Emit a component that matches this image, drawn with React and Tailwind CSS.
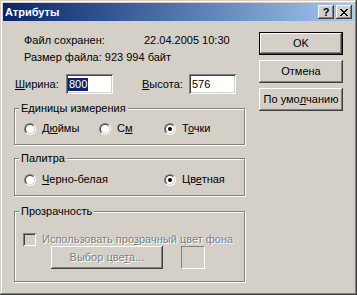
import React from 'react';

function Radio({ checked }) {
  return (
    <span className="flex h-[12px] w-[12px] shrink-0 rounded-full border border-t-[#808080] border-l-[#808080] border-b-white border-r-white">
      <span className="flex h-full w-full items-center justify-center rounded-full border border-t-[#404040] border-l-[#404040] border-b-[#d4d0c8] border-r-[#d4d0c8] bg-white">
        {checked && <span className="h-[4px] w-[4px] rounded-full bg-black" />}
      </span>
    </span>
  );
}

function Option({ checked, children, className }) {
  return (
    <div className={'flex items-center ' + (className || '')}>
      <Radio checked={checked} />
      <span className="ml-[6px] text-black">{children}</span>
    </div>
  );
}

function U({ children }) {
  return <span className="underline underline-offset-[1px]">{children}</span>;
}

function Group({ label, className, children }) {
  return (
    <div className={'relative w-[231px] border border-[#808080] shadow-[inset_1px_1px_0_#ffffff,1px_1px_0_#ffffff] ' + (className || '')}>
      <span className="absolute left-[4px] top-[-7px] bg-[#d4d0c8] px-[2px] leading-[13px]">{label}</span>
      {children}
    </div>
  );
}

function Button({ children, def, className }) {
  if (def) {
    return (
      <div className={'flex h-[23px] w-[84px] border border-black ' + (className || '')}>
        <div className="flex flex-1 items-center justify-center shadow-[inset_-1px_-1px_0_#404040,inset_1px_1px_0_#ffffff,inset_-2px_-2px_0_#808080]">
          {children}
        </div>
      </div>
    );
  }
  return (
    <div className={'flex h-[23px] items-center justify-center shadow-[inset_-1px_-1px_0_#404040,inset_1px_1px_0_#ffffff,inset_-2px_-2px_0_#808080] ' + (className || '')}>
      {children}
    </div>
  );
}

const sunken = 'shadow-[inset_1px_1px_0_#808080,inset_-1px_-1px_0_#ffffff,inset_2px_2px_0_#404040,inset_-2px_-2px_0_#d4d0c8]';

export default function App() {
  return (
    <div className="h-[295px] w-[357px] bg-[#d4d0c8] p-[3px] font-['Liberation_Sans',sans-serif] text-[11px] leading-[13px] text-black shadow-[inset_-1px_-1px_0_#404040,inset_1px_1px_0_#d4d0c8,inset_-2px_-2px_0_#808080,inset_2px_2px_0_#ffffff]">
      {/* Title bar */}
      <div className="flex h-[18px] items-center bg-gradient-to-r from-[#0a246a] to-[#a6caf0] pl-[2px] pr-[2px]">
        <span className="text-[11px] font-bold text-white">Атрибуты</span>
        <div className="ml-auto flex items-center">
          <div className="flex h-[14px] w-[16px] items-center justify-center bg-[#d4d0c8] shadow-[inset_-1px_-1px_0_#404040,inset_1px_1px_0_#ffffff,inset_-2px_-2px_0_#808080]">
            <span className="text-[11px] font-bold leading-[11px] text-black">?</span>
          </div>
          <div className="ml-[2px] flex h-[14px] w-[16px] items-center justify-center bg-[#d4d0c8] shadow-[inset_-1px_-1px_0_#404040,inset_1px_1px_0_#ffffff,inset_-2px_-2px_0_#808080]">
            <svg width="8" height="7" viewBox="0 0 8 7" shapeRendering="crispEdges">
              <path d="M0 0h2v1H0zM6 0h2v1H6zM1 1h2v1H1zM5 1h2v1H5zM2 2h4v1H2zM3 3h2v1H3zM2 4h4v1H2zM1 5h2v1H1zM5 5h2v1H5zM0 6h2v1H0zM6 6h2v1H6z" fill="#000" />
            </svg>
          </div>
        </div>
      </div>

      {/* Content */}
      <div className="flex">
        {/* Left column */}
        <div className="ml-[11px] flex w-[231px] flex-col">
          <div className="mt-[13px] pl-[10px]">
            <div className="flex">
              <span className="w-[120px]">Файл сохранен:</span>
              <span>22.04.2005 10:30</span>
            </div>
            <div className="mt-[4px]">Размер файла: 923 994 байт</div>
          </div>

          <div className="mt-[10px] flex h-[20px] items-center pl-[1px]">
            <span className="w-[51px]"><U>Ш</U>ирина:</span>
            <div className={'flex h-[20px] w-[47px] items-center bg-white pl-[2px] ' + sunken}>
              <span className="bg-[#0a246a] px-[1px] text-white">800</span>
            </div>
            <span className="ml-[29px] w-[47px]"><U>В</U>ысота:</span>
            <div className={'flex h-[20px] w-[47px] items-center bg-white pl-[3px] ' + sunken}>
              <span>576</span>
            </div>
          </div>

          <Group label="Единицы измерения" className="mt-[14px] h-[37px]">
            <div className="flex pl-[9px] pt-[13px]">
              <Option className="w-[75px]">Д<U>ю</U>ймы</Option>
              <Option className="w-[65px]">С<U>м</U></Option>
              <Option checked>Т<U>о</U>чки</Option>
            </div>
          </Group>

          <Group label="Палитра" className="mt-[13px] h-[38px]">
            <div className="flex pl-[9px] pt-[14px]">
              <Option className="w-[140px]"><U>Ч</U>ерно-белая</Option>
              <Option checked>Цв<U>е</U>тная</Option>
            </div>
          </Group>

          <Group label="Прозрачность" className="mt-[15px] h-[71px]">
            <div className="flex items-center pl-[8px] pt-[21px]">
              <span className="h-[13px] w-[13px] shrink-0 bg-[#d4d0c8] shadow-[inset_1px_1px_0_#808080,inset_-1px_-1px_0_#ffffff,inset_2px_2px_0_#404040,inset_-2px_-2px_0_#d4d0c8]" />
              <span className="ml-[6px] text-[#808080] [text-shadow:1px_1px_0_#ffffff]">
                Использовать про<U>з</U>рачный цвет фона
              </span>
            </div>
            <div className="flex pl-[36px]">
              <Button className="w-[112px]">
                <span className="text-[#808080] [text-shadow:1px_1px_0_#ffffff]">Выбор цве<U>т</U>а...</span>
              </Button>
              <div className="ml-[18px] h-[23px] w-[24px] border border-t-[#808080] border-l-[#808080] border-b-white border-r-white" />
            </div>
          </Group>
        </div>

        {/* Right column */}
        <div className="ml-[14px] mt-[11px] flex w-[84px] flex-col">
          <Button def>OK</Button>
          <Button className="mt-[5px] w-[84px]">Отмена</Button>
          <Button className="mt-[5px] w-[84px]">По умо<U>л</U>чанию</Button>
        </div>
      </div>
    </div>
  );
}
